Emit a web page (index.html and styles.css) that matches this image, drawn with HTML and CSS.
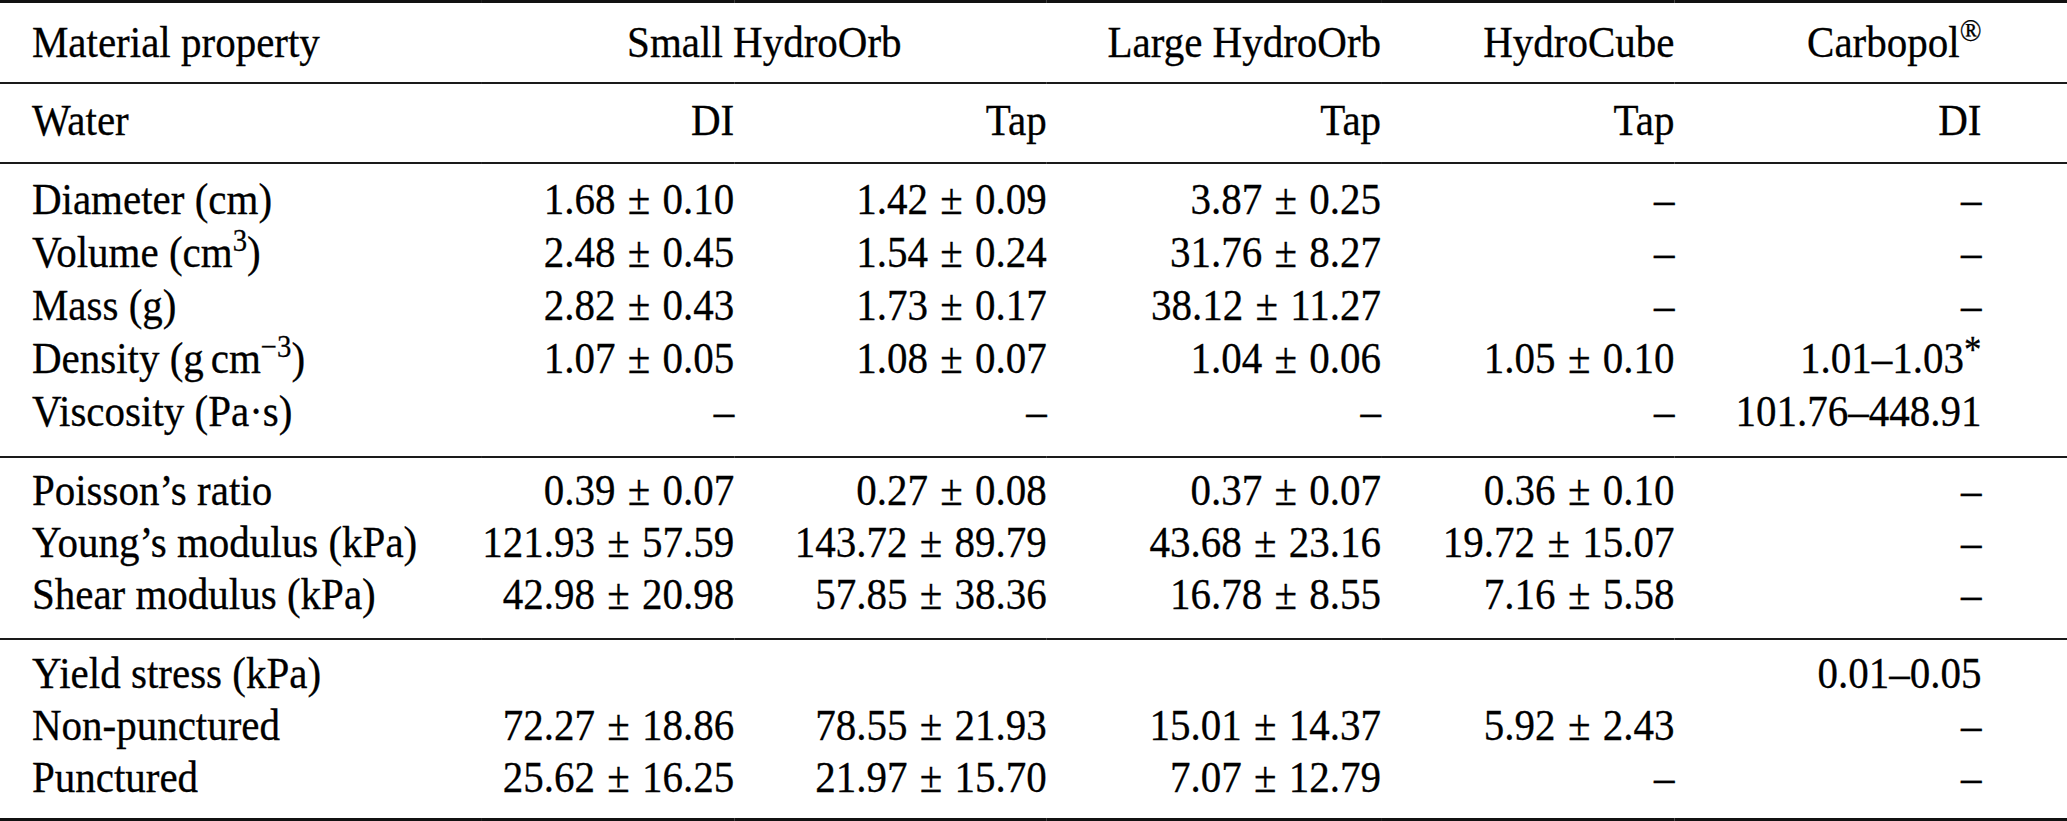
FILE: index.html
```html
<!DOCTYPE html>
<html lang="en">
<head>
<meta charset="utf-8">
<title>Material properties</title>
<link rel="stylesheet" href="styles.css">
</head>
<body>
<div class="sheet">
<table class="props">
  <colgroup>
    <col class="c-label">
    <col class="c-small-di">
    <col class="c-small-tap">
    <col class="c-large">
    <col class="c-cube">
    <col class="c-carbo">
  </colgroup>
  <thead>
    <tr class="head">
      <th class="label">Material property</th>
      <th class="span" colspan="2">Small HydroOrb</th>
      <th>Large HydroOrb</th>
      <th>HydroCube</th>
      <th class="last">Carbopol<sup>®</sup></th>
    </tr>
    <tr class="water">
      <td class="label">Water</td>
      <td>DI</td>
      <td>Tap</td>
      <td>Tap</td>
      <td>Tap</td>
      <td class="last">DI</td>
    </tr>
  </thead>
  <tbody class="group g1">
    <tr>
      <td class="label">Diameter (cm)</td>
      <td>1.68<span class="pm">±</span>0.10</td>
      <td>1.42<span class="pm">±</span>0.09</td>
      <td>3.87<span class="pm">±</span>0.25</td>
      <td>–</td>
      <td class="last">–</td>
    </tr>
    <tr>
      <td class="label">Volume (cm<sup>3</sup>)</td>
      <td>2.48<span class="pm">±</span>0.45</td>
      <td>1.54<span class="pm">±</span>0.24</td>
      <td>31.76<span class="pm">±</span>8.27</td>
      <td>–</td>
      <td class="last">–</td>
    </tr>
    <tr>
      <td class="label">Mass (g)</td>
      <td>2.82<span class="pm">±</span>0.43</td>
      <td>1.73<span class="pm">±</span>0.17</td>
      <td>38.12<span class="pm">±</span>11.27</td>
      <td>–</td>
      <td class="last">–</td>
    </tr>
    <tr>
      <td class="label">Density (g<span class="thin"></span>cm<sup>−3</sup>)</td>
      <td>1.07<span class="pm">±</span>0.05</td>
      <td>1.08<span class="pm">±</span>0.07</td>
      <td>1.04<span class="pm">±</span>0.06</td>
      <td>1.05<span class="pm">±</span>0.10</td>
      <td class="last">1.01–1.03<sup class="ast">*</sup></td>
    </tr>
    <tr>
      <td class="label">Viscosity (Pa·s)</td>
      <td>–</td>
      <td>–</td>
      <td>–</td>
      <td>–</td>
      <td class="last">101.76–448.91</td>
    </tr>
  </tbody>
  <tbody class="group g2">
    <tr>
      <td class="label">Poisson’s ratio</td>
      <td>0.39<span class="pm">±</span>0.07</td>
      <td>0.27<span class="pm">±</span>0.08</td>
      <td>0.37<span class="pm">±</span>0.07</td>
      <td>0.36<span class="pm">±</span>0.10</td>
      <td class="last">–</td>
    </tr>
    <tr>
      <td class="label">Young’s modulus (kPa)</td>
      <td>121.93<span class="pm">±</span>57.59</td>
      <td>143.72<span class="pm">±</span>89.79</td>
      <td>43.68<span class="pm">±</span>23.16</td>
      <td>19.72<span class="pm">±</span>15.07</td>
      <td class="last">–</td>
    </tr>
    <tr>
      <td class="label">Shear modulus (kPa)</td>
      <td>42.98<span class="pm">±</span>20.98</td>
      <td>57.85<span class="pm">±</span>38.36</td>
      <td>16.78<span class="pm">±</span>8.55</td>
      <td>7.16<span class="pm">±</span>5.58</td>
      <td class="last">–</td>
    </tr>
  </tbody>
  <tbody class="group g3">
    <tr>
      <td class="label">Yield stress (kPa)</td>
      <td></td>
      <td></td>
      <td></td>
      <td></td>
      <td class="last">0.01–0.05</td>
    </tr>
    <tr>
      <td class="label">Non-punctured</td>
      <td>72.27<span class="pm">±</span>18.86</td>
      <td>78.55<span class="pm">±</span>21.93</td>
      <td>15.01<span class="pm">±</span>14.37</td>
      <td>5.92<span class="pm">±</span>2.43</td>
      <td class="last">–</td>
    </tr>
    <tr>
      <td class="label">Punctured</td>
      <td>25.62<span class="pm">±</span>16.25</td>
      <td>21.97<span class="pm">±</span>15.70</td>
      <td>7.07<span class="pm">±</span>12.79</td>
      <td>–</td>
      <td class="last">–</td>
    </tr>
  </tbody>
</table>
</div>
</body>
</html>
```

FILE: styles.css
```css
html, body {
  margin: 0;
  padding: 0;
  background: #ffffff;
  overflow: hidden;
}

body {
  font-family: "Liberation Serif", "Times New Roman", serif;
  color: #000000;
}

/* The table is typeset slightly condensed, like the source PDF */
.sheet {
  width: 2067px;
  overflow: hidden;
}

.props {
  width: 2269px;
  table-layout: fixed;
  border-collapse: collapse;
  border-top: 3px solid #111111;
  font-size: 45px;
  line-height: 52px;
  -webkit-text-stroke: 0.3px #000000;
  transform: scaleX(0.911);
  transform-origin: 0 0;
}

.c-label { width: 529px; }
.c-small-di { width: 277px; }
.c-small-tap { width: 343px; }
.c-large { width: 367px; }
.c-cube { width: 322px; }
.c-carbo { width: 431px; }

.props th,
.props td {
  padding: 0;
  text-align: right;
  white-space: nowrap;
  font-weight: normal;
  vertical-align: baseline;
}

.props .label {
  text-align: left;
  padding-left: 35px;
}

.props .last {
  padding-right: 94px;
}

.props .span {
  text-align: center;
}

.head th {
  padding-top: 13px;
  padding-bottom: 14px;
  border-bottom: 2px solid #1a1a1a;
}

.water td {
  padding-top: 10px;
  padding-bottom: 16px;
  border-bottom: 2px solid #1a1a1a;
}

.group {
  border-bottom: 2px solid #1a1a1a;
}

.group.g3 {
  border-bottom: 3px solid #111111;
}

.g1 td { line-height: 53px; }
.g1 tr:first-child td { padding-top: 9px; }
.g1 tr:last-child td { padding-bottom: 18px; }
.g2 tr:first-child td { padding-top: 6px; }
.g2 tr:last-child td { padding-bottom: 18px; }
.g3 tr:first-child td { padding-top: 7px; }
.g3 tr:last-child td { padding-bottom: 15px; }

.pm {
  margin: 0 0.3em;
}

.thin {
  display: inline-block;
  width: 0.17em;
}

sup {
  font-size: 0.7em;
  line-height: 0;
  vertical-align: 0.5em;
}

sup.ast {
  font-size: 0.85em;
  vertical-align: 0.3em;
}
```
